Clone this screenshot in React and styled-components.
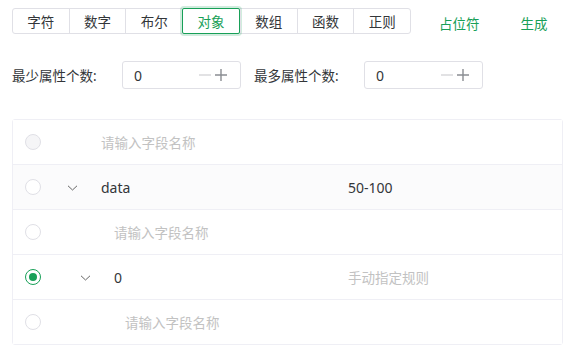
import React from "react";
import styled, { createGlobalStyle } from "styled-components";

const GREEN = "#18a058";

const Global = createGlobalStyle`
  body {
    margin: 0;
    background: #fff;
    font-family: "Noto Sans", "Noto Sans CJK SC", sans-serif;
    color: #333639;
  }
`;

const types = ["字符", "数字", "布尔", "对象", "数组", "函数", "正则"];

const rows = [
  { indent: 0, name: "", value: "", chevron: false, disabled: true },
  { indent: 0, name: "data", value: "50-100", chevron: true, hover: true },
  { indent: 13, name: "", value: "", chevron: false },
  { indent: 13, name: "0", value: "", valueHolder: "手动指定规则", chevron: true, checked: true },
  { indent: 24, name: "", value: "", chevron: false },
];

function Chevron() {
  return (
    <svg width="13" height="13" viewBox="0 0 13 13">
      <path d="M2 4.8 L6.5 9 L11 4.8" fill="none" stroke="#666" strokeWidth="1" />
    </svg>
  );
}

function Counter({ label }) {
  return (
    <Field>
      <Label>{label}</Label>
      <NumberBox>
        <NumberValue>0</NumberValue>
        <Step>
          <svg width="14" height="14" viewBox="0 0 14 14">
            <path d="M1 7 H13" stroke="#d6d6d9" strokeWidth="1.4" />
          </svg>
        </Step>
        <Step>
          <svg width="14" height="14" viewBox="0 0 14 14">
            <path d="M1 7 H13 M7 1 V13" stroke="#8a8d92" strokeWidth="1.4" />
          </svg>
        </Step>
      </NumberBox>
    </Field>
  );
}

export default function App() {
  return (
    <Page>
      <Global />
      <TopBar>
        <Tabs>
          {types.map((t) => (
            <Tab key={t} $active={t === "对象"}>
              {t}
            </Tab>
          ))}
        </Tabs>
        <TextButton $gap={28}>占位符</TextButton>
        <TextButton $gap={41}>生成</TextButton>
      </TopBar>
      <Counters>
        <Counter label="最少属性个数:" />
        <Counter label="最多属性个数:" />
      </Counters>
      <Table>
        {rows.map((r, i) => (
          <Row key={i} $hover={r.hover}>
            <RadioCell>
              <Radio $checked={r.checked} $disabled={r.disabled} />
            </RadioCell>
            <NameCell>
              <Indent style={{ width: r.indent }} />
              <ChevronBox>{r.chevron && <Chevron />}</ChevronBox>
              {r.name ? <Value>{r.name}</Value> : <Holder>请输入字段名称</Holder>}
            </NameCell>
            <ValueCell>
              {r.value ? <Value>{r.value}</Value> : r.valueHolder ? <Holder>{r.valueHolder}</Holder> : null}
            </ValueCell>
          </Row>
        ))}
      </Table>
    </Page>
  );
}

const Page = styled.div`
  padding: 8px 9px 0 12px;
`;

const TopBar = styled.div`
  display: flex;
  align-items: center;
  height: 26px;
`;

const Tabs = styled.div`
  display: flex;
  width: 399px;
  border: 1px solid #e0e0e6;
  border-radius: 3px;
  height: 26px;
  box-sizing: border-box;
`;

const Tab = styled.div`
  flex: 1;
  box-sizing: border-box;
  display: flex;
  align-items: center;
  justify-content: center;
  font-size: 13.5px;
  color: ${(p) => (p.$active ? GREEN : "#333639")};
  border-left: 1px solid #e0e0e6;
  &:first-child {
    border-left: none;
  }
  ${(p) =>
    p.$active &&
    `
    border: 1px solid ${GREEN};
    margin: -1px 0;
    height: 26px;
    box-shadow: 0 0 0 2px rgba(24, 160, 88, 0.2);
    border-radius: 2px;
  `}
`;

const TextButton = styled.div`
  color: ${GREEN};
  font-size: 13.5px;
  padding-top: 3px;
  margin-left: ${(p) => p.$gap}px;
`;

const Counters = styled.div`
  display: flex;
  gap: 13px;
  margin-top: 27px;
`;

const Field = styled.div`
  display: flex;
  align-items: center;
`;

const Label = styled.div`
  width: 110px;
  font-size: 13.5px;
`;

const NumberBox = styled.div`
  width: 119px;
  height: 28px;
  box-sizing: border-box;
  border: 1px solid #e0e0e6;
  border-radius: 3px;
  display: flex;
  align-items: center;
  padding: 0 12px 0 11px;
`;

const NumberValue = styled.div`
  flex: 1;
  font-size: 14px;
  color: #333639;
`;

const Step = styled.div`
  display: flex;
  margin-left: 2px;
`;

const Table = styled.div`
  margin-top: 30px;
  width: 551px;
  border: 1px solid #efeff5;
  border-radius: 3px;
  box-sizing: border-box;
`;

const Row = styled.div`
  display: flex;
  align-items: center;
  height: 45px;
  box-sizing: border-box;
  background: ${(p) => (p.$hover ? "#fbfbfc" : "#fff")};
  border-top: 1px solid #efeff5;
  &:first-child {
    border-top: none;
    height: 44px;
  }
`;

const RadioCell = styled.div`
  width: 47px;
  padding-left: 12px;
  box-sizing: border-box;
  display: flex;
`;

const Radio = styled.div`
  width: 16px;
  height: 16px;
  border-radius: 50%;
  box-sizing: border-box;
  border: 1px solid ${(p) => (p.$checked ? GREEN : "#e0e0e6")};
  background: ${(p) => (p.$disabled ? "#f5f5f7" : "#fff")};
  display: flex;
  align-items: center;
  justify-content: center;
  &::after {
    content: "";
    display: ${(p) => (p.$checked ? "block" : "none")};
    width: 8px;
    height: 8px;
    border-radius: 50%;
    background: ${GREEN};
  }
`;

const NameCell = styled.div`
  width: 288px;
  display: flex;
  align-items: center;
`;

const Indent = styled.div`
  flex-shrink: 0;
`;

const ChevronBox = styled.div`
  width: 41px;
  padding-left: 6px;
  box-sizing: border-box;
  display: flex;
  align-items: center;
`;

const ValueCell = styled.div`
  flex: 1;
  display: flex;
  align-items: center;
`;

const Value = styled.span`
  font-size: 14px;
  color: #333639;
`;

const Holder = styled.span`
  font-size: 13.5px;
  color: #c2c2c2;
`;
